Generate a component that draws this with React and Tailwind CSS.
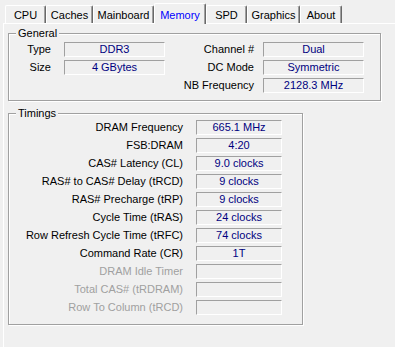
import React from 'react';

const tabs = [
    { name: 'CPU', w: 'w-[41px]' },
    { name: 'Caches', w: 'w-[47px]' },
    { name: 'Mainboard', w: 'w-[61px]' },
    { name: 'Memory', w: 'w-[52px]', active: true },
    { name: 'SPD', w: 'w-[41px]' },
    { name: 'Graphics', w: 'w-[53px]' },
    { name: 'About', w: 'w-[42px]' },
];

const timings = [
    ['DRAM Frequency', '665.1 MHz'],
    ['FSB:DRAM', '4:20'],
    ['CAS# Latency (CL)', '9.0 clocks'],
    ['RAS# to CAS# Delay (tRCD)', '9 clocks'],
    ['RAS# Precharge (tRP)', '9 clocks'],
    ['Cycle Time (tRAS)', '24 clocks'],
    ['Row Refresh Cycle Time (tRFC)', '74 clocks'],
    ['Command Rate (CR)', '1T'],
    ['DRAM Idle Timer', '', true],
    ['Total CAS# (tRDRAM)', '', true],
    ['Row To Column (tRCD)', '', true],
];

const Field = ({ value, w }) => (
    <div className={`${w} h-[15px] flex items-center justify-center border-t border-l border-t-[#a0a0a0] border-l-[#a0a0a0] border-b border-r border-b-white border-r-white text-[#000080] leading-none`}>
        {value}
    </div>
);

const Group = ({ title, className, children }) => (
    <div className={`relative border border-[#a0a0a0] shadow-[inset_1px_1px_0_#fff,1px_1px_0_#fff] ${className}`}>
        <span className="absolute left-[7px] top-[-7px] px-[2px] bg-[#f0f0f0] leading-[13px]">{title}</span>
        {children}
    </div>
);

export default function App() {
    return (
        <div className="w-[395px] h-[347px] overflow-hidden bg-[#f0f0f0] text-[11px] text-black" style={{ fontFamily: '"Liberation Sans", Arial, sans-serif' }}>
            {/* tab strip */}
            <div className="flex items-end h-[23px] pl-[5px]">
                {tabs.map((t) => (
                    <div
                        key={t.name}
                        className={`${t.w} flex justify-center pt-[2px] items-center rounded-t-[2px] border-t border-l border-t-white border-l-white border-r border-r-[#696969] shadow-[inset_-1px_0_0_#a0a0a0] bg-[#f0f0f0] ${t.active ? 'h-[21px] mb-[-1px] relative z-10 text-[#0000ff]' : 'h-[18px]'}`}
                    >
                        {t.name}
                    </div>
                ))}
            </div>

            {/* panel */}
            <div className="ml-[3px] border-t border-l border-white h-[330px] pl-[4px] pt-[9px]">
                <Group title="General" className="w-[373px] h-[68px] pt-[8px]">
                    <div className="flex flex-col gap-[3px]">
                        <div className="flex h-[15px]">
                            <div className="flex">
                                <div className="w-[42px] flex items-center justify-end">Type</div>
                                <div className="w-[13px]" />
                                <Field value="DDR3" w="w-[101px]" />
                            </div>
                            <div className="w-[89px] flex items-center justify-end">Channel #</div>
                            <div className="w-[9px]" />
                            <Field value="Dual" w="w-[101px]" />
                        </div>
                        <div className="flex h-[15px]">
                            <div className="flex">
                                <div className="w-[42px] flex items-center justify-end">Size</div>
                                <div className="w-[13px]" />
                                <Field value="4 GBytes" w="w-[101px]" />
                            </div>
                            <div className="w-[89px] flex items-center justify-end">DC Mode</div>
                            <div className="w-[9px]" />
                            <Field value="Symmetric" w="w-[101px]" />
                        </div>
                        <div className="flex h-[15px]">
                            <div className="w-[156px]" />
                            <div className="w-[89px] flex items-center justify-end whitespace-nowrap">NB Frequency</div>
                            <div className="w-[9px]" />
                            <Field value="2128.3 MHz" w="w-[101px]" />
                        </div>
                    </div>
                </Group>

                <Group title="Timings" className="mt-[12px] w-[295px] h-[212px] pt-[6px]">
                    <div className="flex flex-col gap-[3px]">
                        {timings.map(([label, value, disabled]) => (
                            <div key={label} className="flex h-[15px]">
                                <div className={`w-[174px] flex items-center justify-end whitespace-nowrap ${disabled ? 'text-[#a0a0a0]' : ''}`}>{label}</div>
                                <div className="w-[13px]" />
                                <Field value={value} w="w-[86px]" />
                            </div>
                        ))}
                    </div>
                </Group>
            </div>
        </div>
    );
}
